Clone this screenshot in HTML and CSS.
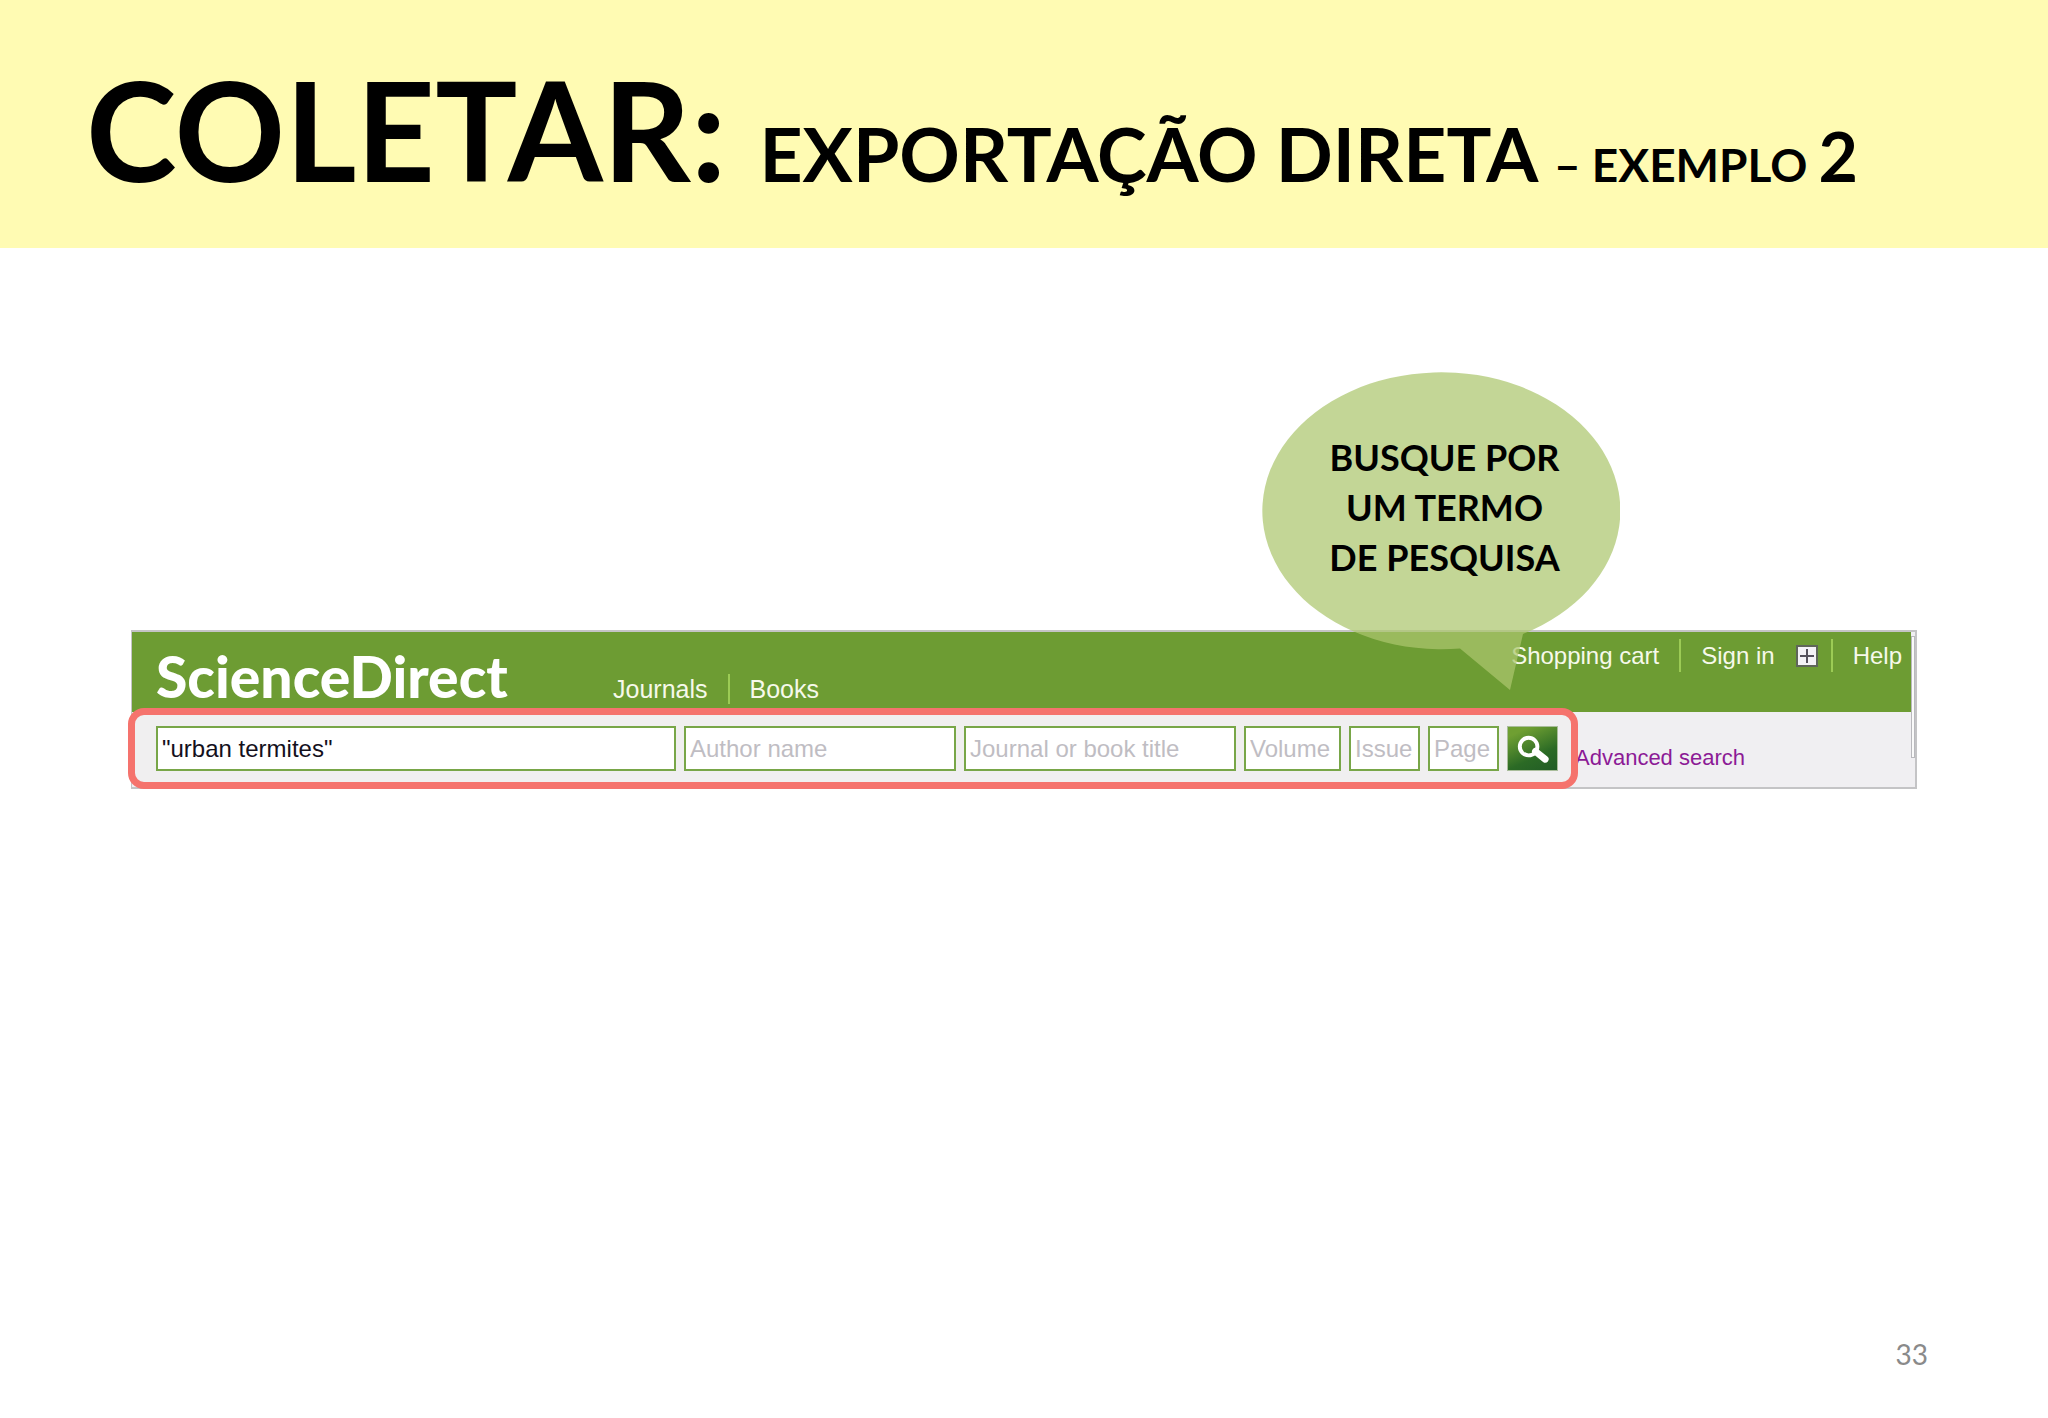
FILE: index.html
```html
<!DOCTYPE html>
<html lang="pt-BR">
<head>
    <meta charset="UTF-8">
    <meta name="viewport" content="width=device-width, initial-scale=1.0">
    <title>Coletar: exportação direta</title>
    <link rel="stylesheet" href="styles.css">
</head>
<body>
  <header class="banner">
    <h1 class="title">COLETAR: <span class="subtitle">EXPORTAÇÃO DIRETA </span><span class="example">– EXEMPLO </span><span class="number">2</span></h1>
  </header>

  <main class="content">
    <div class="panel">
      <div class="topbar">
        <div class="logo">ScienceDirect</div>
        <nav class="sections">
          <a href="#">Journals</a>
          <a href="#">Books</a>
        </nav>
        <nav class="account">
          <a href="#">Shopping cart</a>
          <a href="#">Sign in
            <svg class="plus" viewBox="0 0 22 22" aria-hidden="true">
              <rect x="1" y="1" width="20" height="20" fill="#f4f2f6" stroke="#5f6659" stroke-width="2"/>
              <path d="M11 4v14M4 11h14" stroke="#55515c" stroke-width="2"/>
            </svg>
          </a>
          <a href="#">Help</a>
        </nav>
      </div>
      <div class="searchbar">
        <form class="search">
          <input class="field" type="text" value="&quot;urban termites&quot;" aria-label="Search terms">
          <input class="field" type="text" placeholder="Author name" aria-label="Author name">
          <input class="field" type="text" placeholder="Journal or book title" aria-label="Journal or book title">
          <input class="field" type="text" placeholder="Volume" aria-label="Volume">
          <input class="field" type="text" placeholder="Issue" aria-label="Issue">
          <input class="field" type="text" placeholder="Page" aria-label="Page">
          <button class="search-btn" type="button" aria-label="Search">
            <svg viewBox="0 0 50 44" aria-hidden="true">
              <path d="M28 25L38 33" stroke="#fff" stroke-width="7" stroke-linecap="round"/>
              <circle cx="21" cy="20" r="9" fill="none" stroke="#fff" stroke-width="4"/>
            </svg>
          </button>
        </form>
        <a class="advanced" href="#">Advanced search</a>
      </div>
      <div class="scroll-edge"></div>

      <!-- Speech bubble over the top of the panel -->
      <div class="bubble">
        <svg class="bubble-shape" viewBox="0 0 358 318" aria-hidden="true">
          <path d="M198 276.500A179 138.500 0 1 1 261 262L248 318Z" fill="#acc66e" fill-opacity="0.72"/>
        </svg>
        <p>BUSQUE POR<br>UM TERMO<br>DE PESQUISA</p>
      </div>
    </div>
  </main>

  <footer class="footer">33</footer>
</body>
</html>
```

FILE: styles.css
```css
* {
    box-sizing: border-box;
}
body {
    font-family: Lato, sans-serif;
    background-color: #fff;
    color: #000;
    margin: 0;
    display: flex;
    flex-direction: column;
    min-height: 100vh;
}
.banner {
    background: #fffbb3;
    height: 248px;
    padding: 44px 86px 0;
}
.title {
    margin: 0;
    font-size: 137px;
    line-height: 170px;
    font-weight: 700;
    white-space: nowrap;
}
.subtitle {
    font-size: 75px;
}
.example {
    font-size: 46px;
}
.number {
    font-size: 68px;
}
.title span {
    line-height: 1;
}
.content {
    padding: 382px 131px 0;
}
.panel {
    position: relative;
    border: 2px solid #c4c4c6;
    border-left-width: 1px;
    background: #f0eff2;
    font-family: "Liberation Sans", Arial, sans-serif;
}
.panel a {
    text-decoration: none;
}
.topbar {
    display: flex;
    align-items: flex-start;
    height: 80px;
    margin-right: 4px;
    padding-left: 24px;
    background: #6d9c33;
}
.logo {
    width: 457px;
    padding-top: 10px;
    font-family: Lato, sans-serif;
    font-size: 57px;
    line-height: 68px;
    font-weight: 900;
    color: #fff;
}
.sections,
.account {
    display: flex;
}
.sections {
    padding-top: 42px;
    font-size: 25px;
    line-height: 30px;
}
.account {
    margin-left: auto;
    padding: 7px 9px 0 0;
    font-size: 24px;
    line-height: 33px;
}
.sections a,
.account a {
    color: #f6f9ea;
}
.sections a + a,
.account a + a {
    margin-left: 20px;
    padding-left: 20px;
    border-left: 2px solid #9ccb55;
}
.account a {
    display: flex;
    align-items: center;
}
.plus {
    width: 22px;
    height: 22px;
    margin-left: 21px;
    margin-right: -7px;
}
.searchbar {
    display: flex;
    align-items: flex-start;
    height: 75px;
}
.search {
    position: relative;
    flex: 1;
    display: grid;
    grid-template-columns: 520fr 272fr 272fr 97fr 71fr 71fr 51px;
    gap: 8px;
    min-width: 0;
    height: 81px;
    margin: -4px 0 0 -4px;
    padding: 11px 13px 11px 21px;
    border: 7px solid #f5736d;
    border-radius: 16px;
    background: #f0eff0;
}
.field {
    width: 100%;
    min-width: 0;
    height: 45px;
    padding: 0 0 0 4px;
    border: 2px solid #78a648;
    border-radius: 0;
    background: #fff;
    font-family: inherit;
    font-size: 24px;
    color: #14101c;
}
.field::placeholder {
    color: #bfbdc3;
    opacity: 1;
}
.search-btn {
    height: 45px;
    padding: 0;
    border: 1px solid #a9bd9b;
    background: linear-gradient(155deg, #6f9f32 15%, #2b6a25 65%, #215c26);
    cursor: pointer;
}
.search-btn svg {
    display: block;
    width: 100%;
    height: 100%;
}
.advanced {
    flex: none;
    width: 340px;
    margin-left: -3px;
    padding-top: 32px;
    font-size: 22px;
    line-height: 28px;
    color: #8c1a96;
}
/* Thin frame edge along the right side */
.scroll-edge {
    position: absolute;
    top: 4px;
    right: 0;
    width: 4px;
    height: 122px;
    border: 1px solid #b9b9bd;
    background: #fafafa;
}
.bubble {
    position: absolute;
    top: -260px;
    right: 295px;
    width: 358px;
    height: 318px;
    color: #000;
}
.bubble-shape {
    position: absolute;
    inset: 0;
}
.bubble p {
    position: relative;
    margin: 0;
    padding: 60px 0 0 7px;
    font-family: Lato, sans-serif;
    font-size: 36px;
    line-height: 50px;
    font-weight: 700;
    text-align: center;
}
.footer {
    margin-top: auto;
    padding: 0 120px 47px;
    font-size: 28px;
    line-height: 34px;
    text-align: right;
    color: #8a8a8a;
}
```
